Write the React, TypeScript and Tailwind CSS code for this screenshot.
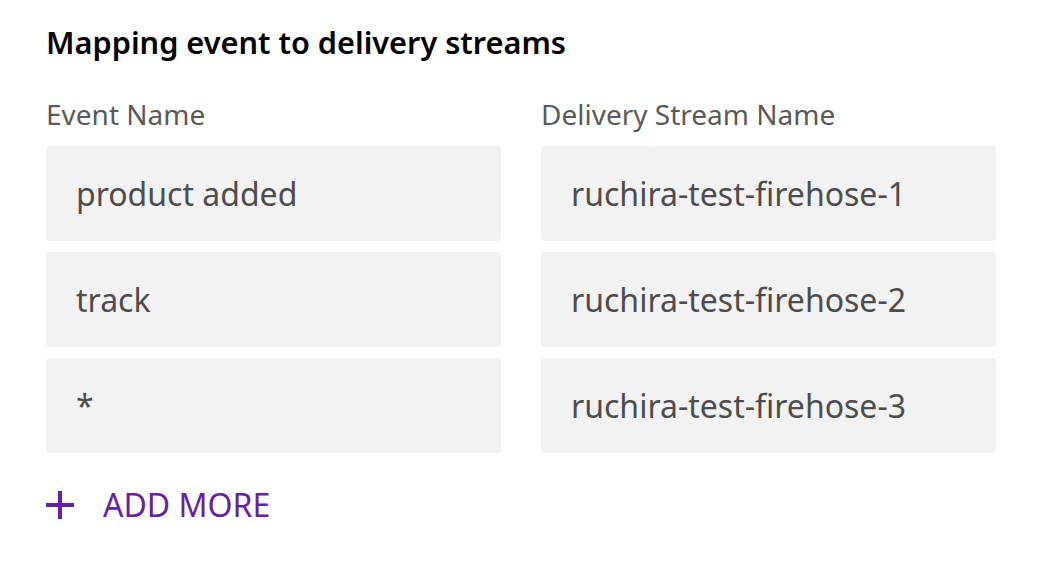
import React from "react";

const rows = [
  { event: "product added", stream: "ruchira-test-firehose-1" },
  { event: "track", stream: "ruchira-test-firehose-2" },
  { event: "*", stream: "ruchira-test-firehose-3" },
];

function Field({ value }: { value: string }) {
  return (
    <div className="h-[95px] rounded-[4px] bg-[#f2f2f2] pl-[30px] flex items-center text-[32px] text-[#4d4d4d]">
      {value}
    </div>
  );
}

export default function App() {
  return (
    <div
      className="w-[1060px] h-[562px] bg-white pl-[46px] pt-[22px]"
      style={{ fontFamily: '"Noto Sans", "Open Sans", sans-serif' }}
    >
      <div className="w-[950px]">
        <h2 className="text-[30.7px] leading-[40px] font-semibold text-black">
          Mapping event to delivery streams
        </h2>

        <div className="grid grid-cols-2 gap-x-[40px] mt-[35px]">
          <div className="text-[28px] leading-[34px] text-[#5a5a5a]">Event Name</div>
          <div className="text-[28px] leading-[34px] text-[#5a5a5a]">Delivery Stream Name</div>
        </div>

        <div className="grid grid-cols-2 gap-x-[40px] gap-y-[11px] mt-[15px]">
          {rows.map((r) => (
            <React.Fragment key={r.stream}>
              <Field value={r.event} />
              <Field value={r.stream} />
            </React.Fragment>
          ))}
        </div>

        <button className="mt-[32px] flex items-center gap-[29px] text-[#6520a3]">
          <svg width="28" height="28" viewBox="0 0 28 28" fill="none">
            <path d="M14 0V28M0 14H28" stroke="currentColor" strokeWidth="4" />
          </svg>
          <span className="text-[32px] leading-[40px]">ADD MORE</span>
        </button>
      </div>
    </div>
  );
}
